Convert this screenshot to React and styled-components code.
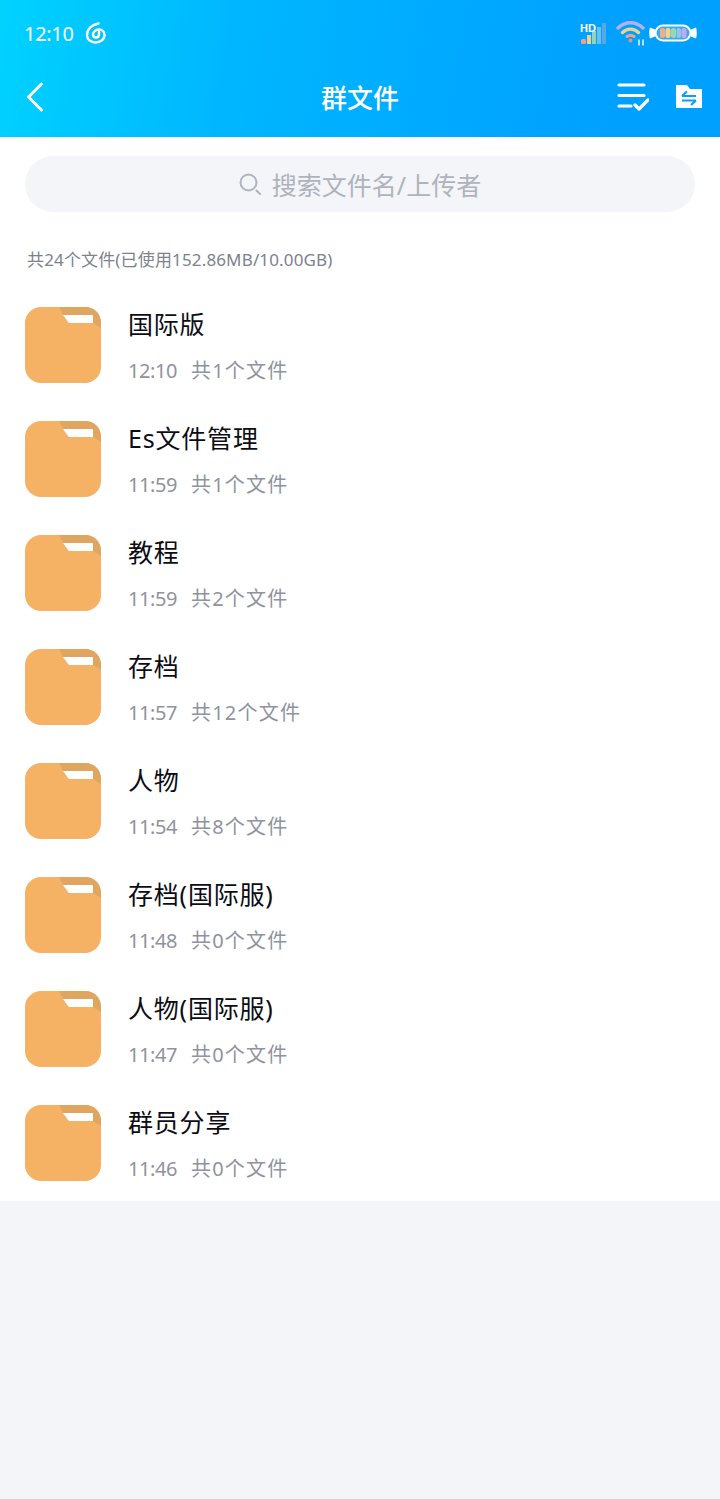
import React from 'react'
import styled, { createGlobalStyle } from 'styled-components'

const files = [
  { name: '国际版', time: '12:10', count: '共1个文件' },
  { name: 'Es文件管理', time: '11:59', count: '共1个文件' },
  { name: '教程', time: '11:59', count: '共2个文件' },
  { name: '存档', time: '11:57', count: '共12个文件' },
  { name: '人物', time: '11:54', count: '共8个文件' },
  { name: '存档(国际服)', time: '11:48', count: '共0个文件' },
  { name: '人物(国际服)', time: '11:47', count: '共0个文件' },
  { name: '群员分享', time: '11:46', count: '共0个文件' },
]

function FolderIcon() {
  return (
    <FolderSvg viewBox="0 0 76 76">
      <rect width="76" height="76" rx="16" fill="#f6b264" />
      <path d="M34 0H60C69.5 0 76 6.5 76 16V21L68 16H43L38 8Z" fill="#e0a660" />
      <path d="M38 8H67C67.6 8 68 8.4 68 9V16H45C44 16 43.4 15.7 42.9 15Z" fill="#fff" />
    </FolderSvg>
  )
}

function App() {
  return (
    <Page>
      <GlobalStyle />
      <TopBar>
        <StatusBar>
          <StatusLeft>
            <Clock>12:10</Clock>
            <svg width="22" height="22" viewBox="0 0 22 22" fill="none" stroke="#fff" strokeWidth="2.4" strokeLinecap="round">
              <path d="M13.5 1.5C7.5 2.5 2 6.5 2 13C2 17.5 5.8 20.5 10.5 20.5C15.5 20.5 19.5 17.5 19.5 13C19.5 9.5 17 7.5 14 7.5C10.5 7.5 8 10 8 12.5C8 14.5 9.3 15.5 11 15.5C12.8 15.5 14 14.3 14 12.5V10" />
            </svg>
          </StatusLeft>
          <StatusRight>
            <svg width="34" height="24" viewBox="0 0 34 24">
              <rect x="2" y="18" width="5" height="5" rx="1.5" fill="#f0a088" />
              <rect x="8" y="14" width="4" height="9" fill="#efd38c" />
              <rect x="13" y="10" width="4" height="13" fill="#8fd3c0" />
              <rect x="18" y="6" width="4" height="17" fill="#6cc0e8" />
              <rect x="23" y="2" width="4" height="21" fill="#58a8e4" />
              <text x="1" y="11" fontSize="11" fontWeight="700" fill="#fff" fontFamily="'Liberation Sans', sans-serif">HD</text>
            </svg>
            <svg width="30" height="26" viewBox="0 0 30 26" fill="none" strokeLinecap="round">
              <path d="M2 8C9 1 20 1 27 8" stroke="#b8aef0" strokeWidth="3.4" />
              <path d="M6.5 12.5C11 8 18 8 22.5 12.5" stroke="#e9d494" strokeWidth="3.4" />
              <path d="M11 16.5C13 15 16 15 18 16.5" stroke="#f0a484" strokeWidth="3" />
              <circle cx="14.5" cy="20.5" r="2" fill="#f0906c" />
              <path d="M23 20V25M27 20V25" stroke="#dff2ff" strokeWidth="1.6" />
            </svg>
            <svg width="48" height="18" viewBox="0 0 48 18">
              <path d="M1 3.5L6 5.5V12.5L1 14.5C0 12 0 6 1 3.5ZM47 3.5L42 5.5V12.5L47 14.5C48 12 48 6 47 3.5Z" fill="#fff" />
              <rect x="6.5" y="1.5" width="35" height="15" rx="7.5" fill="#3ca9ee" stroke="#fff" strokeWidth="2" />
              <rect x="11" y="4" width="5" height="10" rx="2" fill="#f3ab88" />
              <rect x="16.5" y="4" width="5" height="10" rx="2" fill="#efd38c" />
              <rect x="22" y="4" width="5" height="10" rx="2" fill="#94d8b8" />
              <rect x="27.5" y="4" width="4.5" height="10" rx="2" fill="#8fc8e8" />
              <rect x="32.5" y="4" width="5" height="10" rx="2" fill="#c2aaf0" />
            </svg>
          </StatusRight>
        </StatusBar>
        <NavBar>
          <svg width="20" height="30" viewBox="0 0 20 30" fill="none" stroke="#fff" strokeWidth="3" strokeLinecap="round" strokeLinejoin="round">
            <path d="M15.5 2L2.5 15L15.5 28" />
          </svg>
          <NavTitle>群文件</NavTitle>
          <NavActions>
            <svg width="32" height="28" viewBox="0 0 32 28" fill="none" stroke="#fff" strokeWidth="3.2" strokeLinecap="round" strokeLinejoin="round">
              <path d="M2 2H27M2 12.5H27M2 23H14" />
              <path d="M18 22L22 26L31 17" />
            </svg>
            <svg width="28" height="25" viewBox="0 0 28 25">
              <path d="M1 1H12L15 5H27V24H1Z" fill="#fff" />
              <path d="M7 12H21M7 12L12 7.5M21 16.5H7M21 16.5L16 21" fill="none" stroke="#0a9ff5" strokeWidth="2.2" />
            </svg>
          </NavActions>
        </NavBar>
      </TopBar>
      <Content>
        <SearchBox>
          <svg width="22" height="24" viewBox="0 0 22 24" fill="none" stroke="#aeb3bd" strokeWidth="2" strokeLinecap="round">
            <circle cx="9.5" cy="10.5" r="8" />
            <path d="M17.5 18.5L21 22" />
          </svg>
          搜索文件名/上传者
        </SearchBox>
        <Summary>共24个文件(已使用152.86MB/10.00GB)</Summary>
        <List>
          {files.map((file) => (
            <Row key={file.name}>
              <FolderIcon />
              <RowText>
                <Name>{file.name}</Name>
                <Meta>
                  <TimeLabel>{file.time}</TimeLabel>
                  <CountLabel>{file.count}</CountLabel>
                </Meta>
              </RowText>
            </Row>
          ))}
        </List>
      </Content>
    </Page>
  )
}

const GlobalStyle = createGlobalStyle`
  html, body {
    margin: 0;
    padding: 0;
    background: #f4f5f9;
  }
  * {
    box-sizing: border-box;
  }
`

const Page = styled.div`
  width: 720px;
  min-height: 1499px;
  background: #f4f5f9;
  font-family: "Noto Sans", "Noto Sans CJK SC", sans-serif;
`

const TopBar = styled.header`
  height: 137px;
  background: linear-gradient(100deg, #00d2ff 0%, #00b6ff 33%, #00a0ff 85%);
  color: #fff;
`

const StatusBar = styled.div`
  height: 66px;
  padding: 0 23px 0 24px;
  display: flex;
  align-items: center;
  justify-content: space-between;
`

const StatusLeft = styled.div`
  display: flex;
  align-items: center;
  gap: 11px;
`

const Clock = styled.span`
  font-size: 20px;
  letter-spacing: -0.3px;
`

const StatusRight = styled.div`
  display: flex;
  align-items: center;
  gap: 3px;
`

const NavBar = styled.div`
  height: 71px;
  padding: 0 17px 10px 26px;
  display: flex;
  align-items: center;
  justify-content: space-between;
  position: relative;
`

const NavTitle = styled.h1`
  position: absolute;
  left: 0;
  right: 0;
  margin: 0;
  text-align: center;
  font-size: 26px;
  font-weight: 500;
  pointer-events: none;
`

const NavActions = styled.div`
  display: flex;
  align-items: center;
  gap: 26px;
`

const Content = styled.main`
  background: #fff;
  padding: 19px 0 1px;
`

const SearchBox = styled.div`
  height: 56px;
  margin: 0 25px;
  border-radius: 28px;
  background: #f4f5f9;
  color: #aeb3bd;
  font-size: 25px;
  display: flex;
  align-items: center;
  justify-content: center;
  gap: 11px;
`

const Summary = styled.div`
  margin: 35px 0 0 27px;
  height: 26px;
  line-height: 26px;
  font-size: 17px;
  letter-spacing: 0.15px;
  color: #7d828c;
`

const List = styled.ul`
  list-style: none;
  margin: 15px 0 0;
  padding: 0;
`

const Row = styled.li`
  height: 114px;
  padding: 19px 25px;
  display: flex;
  align-items: flex-start;
  gap: 27px;
`

const FolderSvg = styled.svg`
  width: 76px;
  height: 76px;
  flex-shrink: 0;
`

const RowText = styled.div`
  display: flex;
  flex-direction: column;
  gap: 15px;
`

const Name = styled.div`
  height: 34px;
  line-height: 34px;
  font-size: 25px;
  letter-spacing: 0.8px;
  color: #0c0c14;
`

const Meta = styled.div`
  height: 30px;
  line-height: 30px;
  font-size: 20px;
  color: #8f939e;
  display: flex;
`

const TimeLabel = styled.span`
  width: 63px;
  letter-spacing: -0.4px;
`

const CountLabel = styled.span`
  letter-spacing: 1.2px;
`

export default App
